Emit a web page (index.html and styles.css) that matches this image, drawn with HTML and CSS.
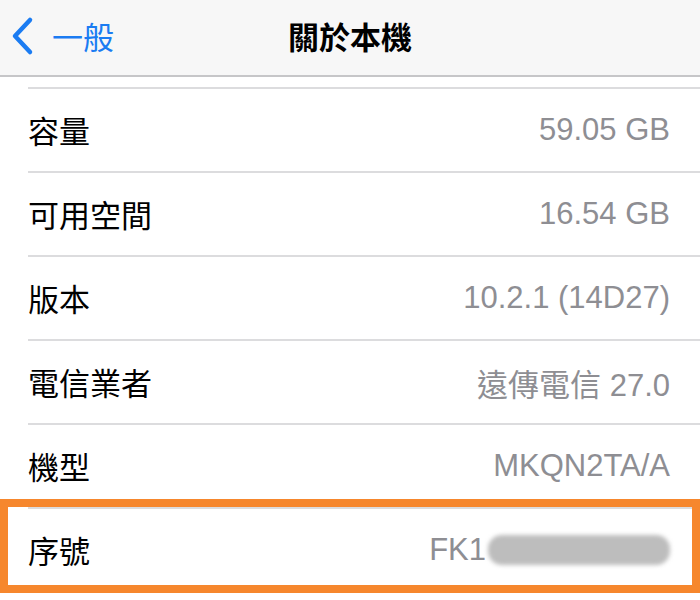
FILE: index.html
```html
<!DOCTYPE html>
<html lang="zh-Hant">
<head>
    <meta charset="UTF-8">
    <meta name="viewport" content="width=device-width, initial-scale=1.0">
    <title>關於本機</title>
    <link rel="stylesheet" href="styles.css">
</head>
<body>

<header class="nav">
    <a class="back" href="#">
        <svg class="chevron" width="26" height="40" viewBox="0 0 26 40">
            <path d="M22 4 L7 20 L22 36" fill="none" stroke="#1b7cf2" stroke-width="4.5" stroke-linecap="round" stroke-linejoin="round"/>
        </svg>
        <span>一般</span>
    </a>
    <h1>關於本機</h1>
</header>

<div class="list">
    <div class="peek"></div>
    <div class="row"><span class="label">容量</span><span class="value">59.05 GB</span></div>
    <div class="row"><span class="label">可用空間</span><span class="value">16.54 GB</span></div>
    <div class="row"><span class="label">版本</span><span class="value">10.2.1 (14D27)</span></div>
    <div class="row"><span class="label">電信業者</span><span class="value">遠傳電信 27.0</span></div>
    <div class="row"><span class="label">機型</span><span class="value">MKQN2TA/A</span></div>
    <div class="row"><span class="label">序號</span><span class="value">FK1<span class="blur"></span></span></div>
</div>

<!-- highlight frame drawn over the serial number row -->
<div class="highlight"></div>

</body>
</html>
```

FILE: styles.css
```css
body {
    margin: 0;
    padding: 0;
    background: #ffffff;
    font-family: "Liberation Sans", "Noto Sans CJK TC", sans-serif;
    width: 700px;
    height: 600px;
    overflow: hidden;
    position: relative;
}
.nav {
    height: 75px;
    background: #f7f7f7;
    border-bottom: 2px solid #c6c6c8;
    display: flex;
    align-items: center;
    justify-content: center;
    position: relative;
}
.nav h1 {
    margin: 0 0 4px 0;
    font-size: 31px;
    font-weight: 600;
    color: #000;
    font-family: "Noto Sans CJK TC", sans-serif;
}
.back {
    position: absolute;
    left: 8px;
    top: 0;
    height: 71px;
    display: flex;
    align-items: center;
    gap: 20px;
    color: #1b7cf2;
    text-decoration: none;
    font-size: 31px;
    font-family: "Noto Sans CJK TC", sans-serif;
}
.back span {
    margin-left: -2px;
}
.chevron {
    display: block;
}
.list {
    display: flex;
    flex-direction: column;
}
.peek {
    height: 10px;
}
.row {
    height: 82px;
    margin-left: 28px;
    padding-right: 30px;
    border-top: 2px solid #dcdcde;
    display: flex;
    align-items: center;
    justify-content: space-between;
}
.label {
    font-size: 31px;
    color: #000;
    font-family: "Noto Sans CJK TC", sans-serif;
    margin-top: -2px;
}
.value {
    font-size: 31px;
    color: #8e8e93;
    display: flex;
    align-items: center;
}
.blur {
    display: inline-block;
    width: 182px;
    height: 30px;
    margin-left: 2px;
    background: #bdbdbd;
    border-radius: 14px;
    filter: blur(2px);
}
.highlight {
    position: absolute;
    left: 0;
    top: 499px;
    width: 684px;
    height: 78px;
    border: 8px solid #f6872d;
}
```
